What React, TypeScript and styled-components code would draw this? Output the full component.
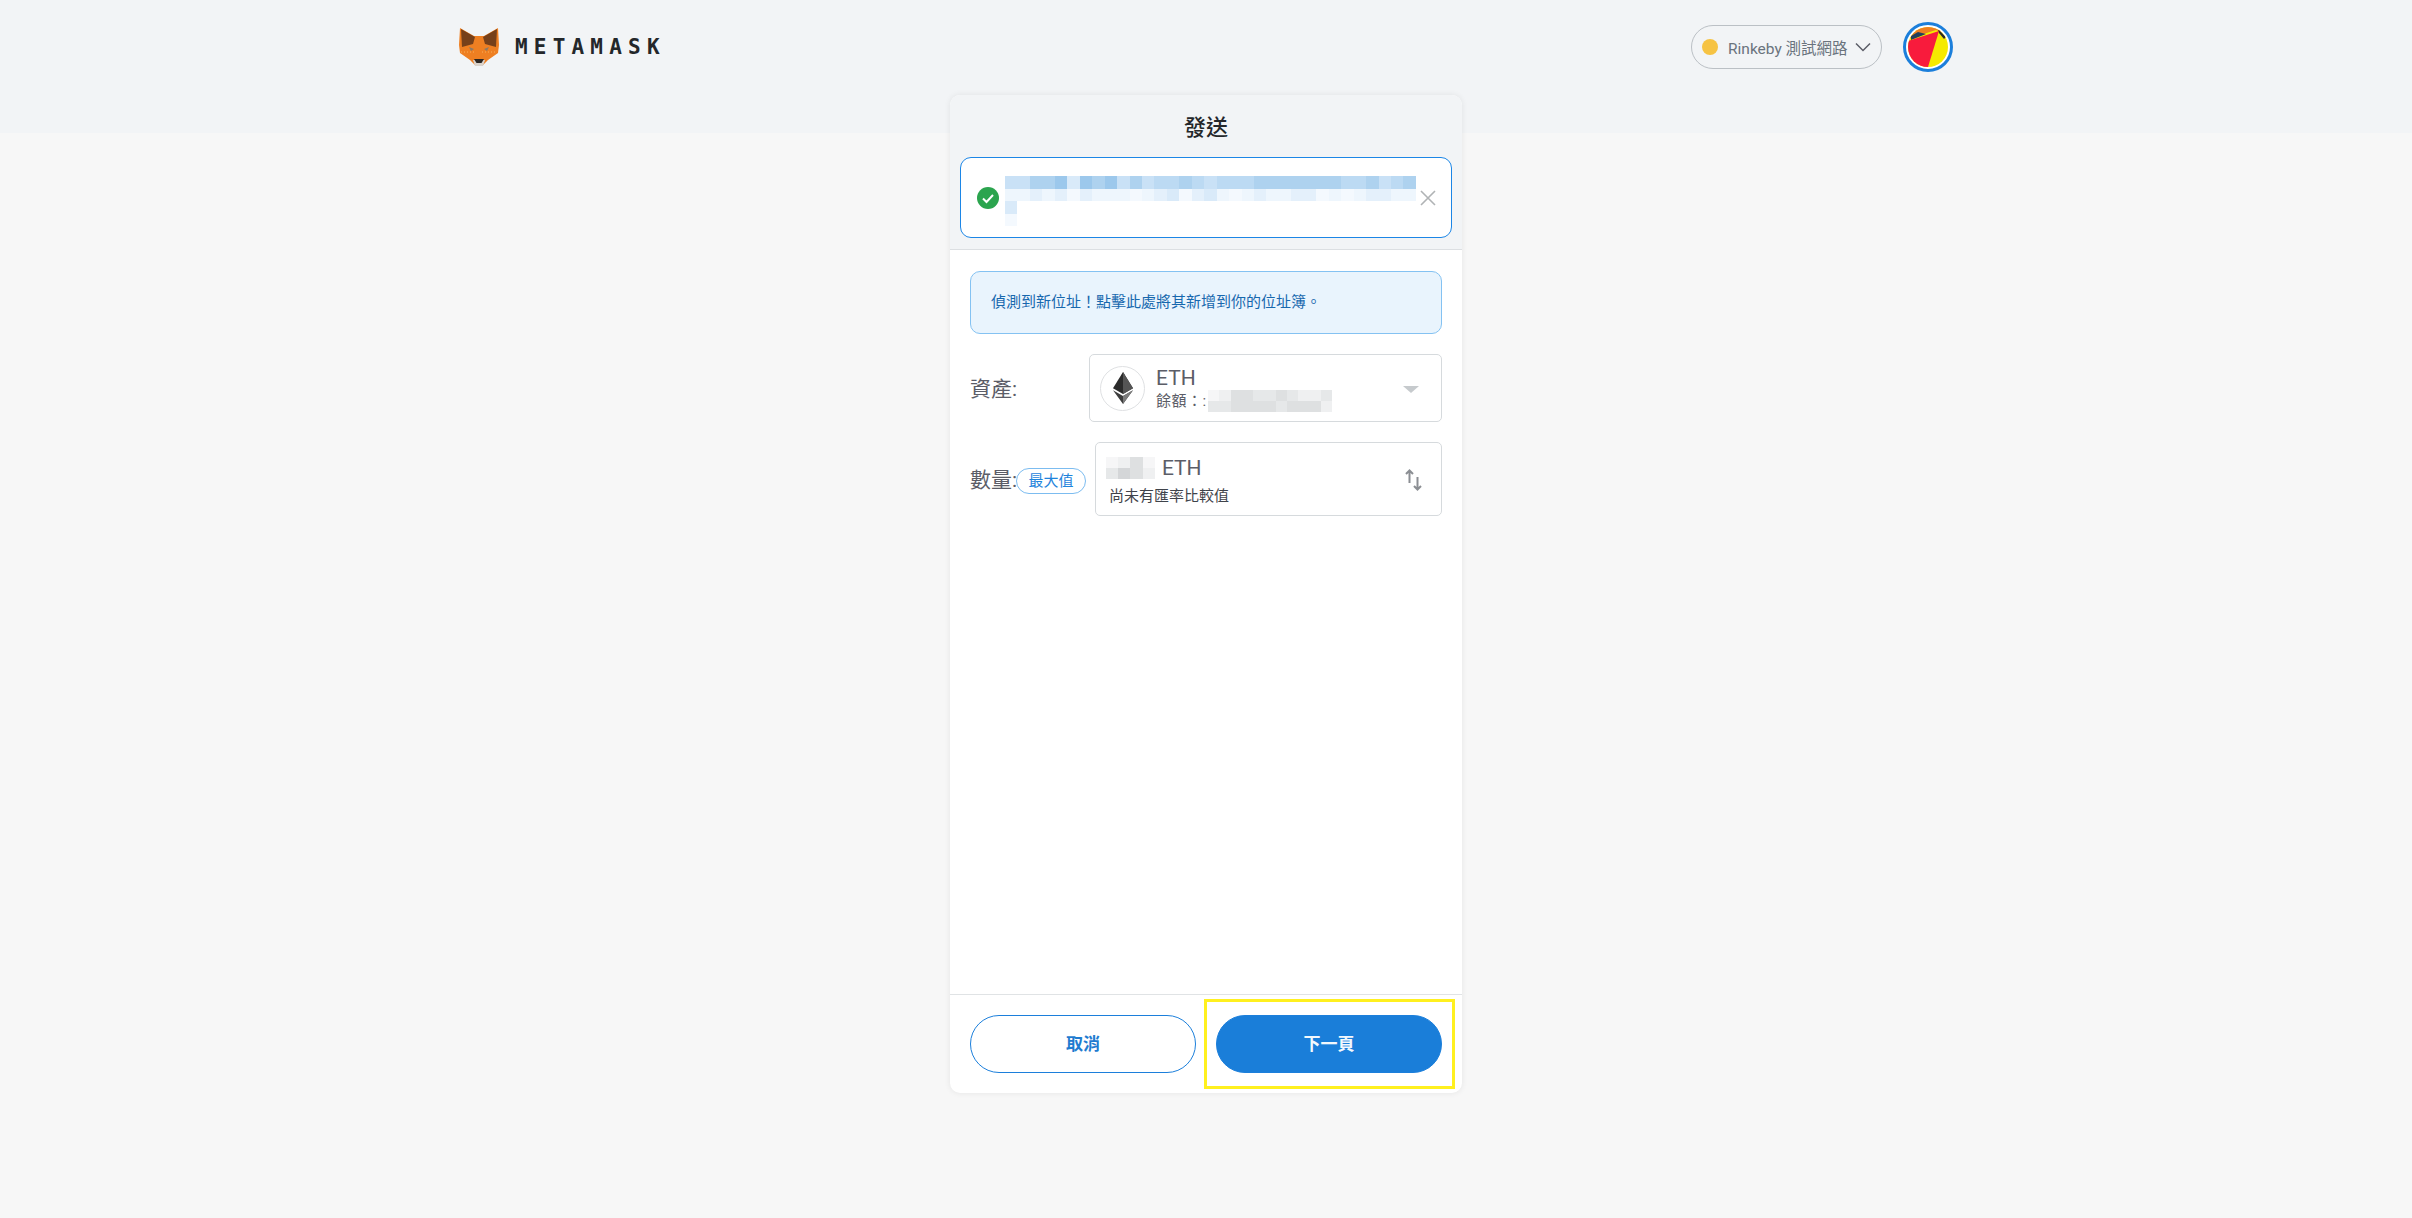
import React from "react";
import styled, { createGlobalStyle } from "styled-components";

const CJK = `"Roboto", "Noto Sans CJK TC", sans-serif`;

const Global = createGlobalStyle`
  html, body { margin: 0; padding: 0; }
  body { background: #f7f7f7; font-family: ${CJK}; }
`;

const Page = styled.div`
  position: relative;
  width: 2412px;
  height: 1218px;
  overflow: hidden;
  background: #f7f7f7;
`;

const TopBand = styled.header`
  height: 133px;
  background: #f2f4f6;
  padding: 0 458px;
  box-sizing: border-box;
`;

const TopBar = styled.div`
  height: 93px;
  display: flex;
  align-items: center;
  justify-content: space-between;
`;

const Brand = styled.div`
  display: flex;
  align-items: center;
  gap: 15px;
  margin-top: 1px;
`;

const BrandName = styled.span`
  font-family: "DejaVu Sans Mono", monospace;
  font-weight: 700;
  font-size: 21px;
  letter-spacing: 6.2px;
  color: #24272a;
`;

const TopRight = styled.div`
  display: flex;
  align-items: center;
  gap: 21px;
  margin-right: 1px;
`;

const NetworkPill = styled.div`
  width: 191px;
  height: 44px;
  box-sizing: border-box;
  border: 1.5px solid #bbc0c5;
  border-radius: 22px;
  display: flex;
  align-items: center;
  padding: 0 10px;
  color: #6a737d;
  font-size: 15.5px;
`;

const NetworkDot = styled.span`
  width: 16px;
  height: 16px;
  border-radius: 50%;
  background: #f6c343;
  margin-right: 10px;
  flex: none;
`;

const NetworkName = styled.span`
  flex: 1;
  white-space: nowrap;
`;

const AvatarRing = styled.div`
  width: 50px;
  height: 50px;
  box-sizing: border-box;
  border: 3px solid #1c7fdb;
  border-radius: 50%;
  padding: 2px;
  background: #fff;
`;

const Card = styled.main`
  position: absolute;
  left: 950px;
  top: 95px;
  width: 512px;
  height: 998px;
  background: #fff;
  border-radius: 10px;
  box-shadow: 0 0 6px rgba(0, 0, 0, 0.08);
  display: flex;
  flex-direction: column;
  overflow: hidden;
`;

const CardHead = styled.div`
  height: 155px;
  box-sizing: border-box;
  background: #f2f4f6;
  border-bottom: 1.5px solid #dcdfe2;
  padding: 0 10px;
  flex: none;
`;

const Title = styled.h1`
  margin: 0;
  height: 62px;
  line-height: 66px;
  font-size: 22px;
  font-weight: 500;
  text-align: center;
  color: #24272a;
`;

const AlertBox = styled.div`
  height: 81px;
  box-sizing: border-box;
  width: 492px;
  background: #fff;
  border: 1.5px solid #1c86e6;
  border-radius: 11px;
  display: flex;
  align-items: center;
  padding: 0 0 0 16px;
  position: relative;
`;

const AlertMosaic = styled.div`
  margin-left: 6px;
  align-self: flex-start;
  margin-top: 18px;
  display: flex;
`;

const CloseBtn = styled.span`
  position: absolute;
  right: 15px;
  top: 32px;
  display: flex;
`;

const CardBody = styled.div`
  flex: 1;
  padding: 21px 20px 0 20px;
  display: flex;
  flex-direction: column;
`;

const Notice = styled.div`
  height: 63px;
  box-sizing: border-box;
  background: #e9f4fd;
  border: 1.5px solid #84c2f2;
  border-radius: 10px;
  display: flex;
  align-items: center;
  padding: 0 20px 4px;
  font-size: 15px;
  color: #1768ae;
  white-space: nowrap;
`;

const FieldRow = styled.div<{ $top: number }>`
  display: flex;
  align-items: center;
  margin-top: ${(p) => p.$top}px;
`;

const FieldLabel = styled.label`
  font-size: 21px;
  color: #5b5d67;
  white-space: nowrap;
  margin-top: -2px;
`;

const MaxBadge = styled.span`
  width: 70px;
  height: 26px;
  box-sizing: border-box;
  border: 1px solid #7cbcf0;
  border-radius: 13px;
  font-size: 15px;
  line-height: 24px;
  text-align: center;
  color: #1f84dc;
  background: #fff;
  flex: none;
  margin: 4px 0 0 -1px;
`;

const FieldBox = styled.div<{ $h: number; $left: number }>`
  height: ${(p) => p.$h}px;
  margin-left: ${(p) => p.$left}px;
  flex: 1;
  box-sizing: border-box;
  border: 1.5px solid #d6dadd;
  border-radius: 5px;
  display: flex;
  align-items: center;
  position: relative;
`;

const TokenCircle = styled.div`
  width: 45px;
  height: 45px;
  box-sizing: border-box;
  margin-left: 10px;
  border: 1px solid #dfe1e3;
  border-radius: 50%;
  display: flex;
  align-items: center;
  justify-content: center;
  flex: none;
`;

const TokenText = styled.div`
  margin-left: 11px;
  display: flex;
  flex-direction: column;
  padding-top: 2px;
`;

const TokenName = styled.span`
  font-size: 21px;
  line-height: 24px;
  color: #5b5d67;
`;

const Balance = styled.div`
  display: flex;
  align-items: center;
  font-size: 15px;
  letter-spacing: 0.5px;
  line-height: 22px;
  color: #5b5d67;
  height: 22px;
  gap: 1px;
`;

const Caret = styled.span`
  position: absolute;
  right: 22px;
  top: 31px;
  width: 0;
  height: 0;
  border-left: 8px solid transparent;
  border-right: 8px solid transparent;
  border-top: 7px solid #c6cacd;
`;

const AmountCol = styled.div`
  margin-left: 10px;
  margin-top: 2px;
  display: flex;
  flex-direction: column;
`;

const AmountLine = styled.div`
  display: flex;
  align-items: center;
  gap: 7px;
  height: 28px;
  font-size: 21px;
  color: #5b5d67;
`;

const RateNote = styled.div`
  margin-left: 3px;
  margin-top: 4px;
  font-size: 15px;
  line-height: 20px;
  color: #3f434a;
  white-space: nowrap;
`;

const SwapIcon = styled.span`
  position: absolute;
  right: 19px;
  top: 26px;
  display: flex;
`;

const CardFoot = styled.footer`
  height: 99px;
  flex: none;
  box-sizing: border-box;
  border-top: 1.5px solid #e0e3e5;
  padding: 20px 20px 0 20px;
  display: flex;
  justify-content: space-between;
`;

const FootBtn = styled.button<{ $primary?: boolean }>`
  width: 226px;
  height: 58px;
  box-sizing: border-box;
  border-radius: 29px;
  border: 1.5px solid #1c7fdb;
  font-family: ${CJK};
  font-size: 17px;
  font-weight: 700;
  background: ${(p) => (p.$primary ? "#1a7ed9" : "#fff")};
  color: ${(p) => (p.$primary ? "#f2f8fd" : "#1f7cd0")};
  padding: 0 0 3px;
`;

const Highlight = styled.div`
  position: absolute;
  left: 1204px;
  top: 999px;
  width: 251px;
  height: 90px;
  box-sizing: border-box;
  border: 3px solid #fff01f;
  pointer-events: none;
`;

/* pixelated (redacted) blocks, one char per cell */
const palette: Record<string, string> = {
  z: "#9cc8ec",
  a: "#aed2ef",
  b: "#bcdaf3",
  c: "#c9e1f6",
  d: "#d9eaf9",
  e: "#e4f0fb",
  f: "#eef6fd",
  g: "#f4f9fe",
  q: "#d4d6d8",
  r: "#dee0e1",
  s: "#e6e8e9",
  t: "#eff0f1",
  u: "#f6f6f7",
};

function Mosaic({ rows, w, h }: { rows: string[]; w: number; h: number }) {
  const cols = Math.max(...rows.map((r) => r.length));
  return (
    <svg width={cols * w} height={rows.length * h} shapeRendering="crispEdges">
      {rows.map((row, y) =>
        row.split("").map((c, x) =>
          palette[c] ? <rect key={`${x}-${y}`} x={x * w} y={y * h} width={w} height={h} fill={palette[c]} /> : null
        )
      )}
    </svg>
  );
}

const Fox = () => (
  <svg width="42" height="40" viewBox="0 0 42 40">
    <path d="M2 1 L16 9 H26 L40 1 L41 18 L40 26 L30 33 L25 38 H17 L12 33 L2 26 L1 18Z" fill="#ee7f22" />
    <path d="M3 2 L17 10 L15 17 L4 20Z" fill="#76401a" />
    <path d="M39 2 L25 10 L27 17 L38 20Z" fill="#76401a" />
    <path d="M11 20 L16 22 L13 24Z M31 20 L26 22 L29 24Z" fill="#8a7a68" />
    <path d="M3 25 H18 M24 25 H39" stroke="#f7b15c" strokeWidth="1" strokeDasharray="1 2" />
    <path d="M15 33 H27 L25 39 H17Z" fill="#d9d2cb" />
    <path d="M16 32 H26 L23.5 36 H18.5Z" fill="#2a2522" />
  </svg>
);

const Avatar = () => (
  <svg width="40" height="40" viewBox="0 0 40 40" style={{ display: "block", borderRadius: "50%" }}>
    <rect width="40" height="40" fill="#f5ea00" />
    <path d="M0 0 H40 V8 L28 3 L0 12Z" fill="#ee7f22" />
    <path d="M3 9 L10 5 L18 7 L3 13Z" fill="#22405c" />
    <path d="M0 14 L31 4 L20 40 H0Z" fill="#f81b3c" />
    <path d="M30 2 L38 10 L36 12 L31 6Z" fill="#2b2b2b" />
  </svg>
);

const EthGlyph = () => (
  <svg width="20" height="32" viewBox="0 0 20 32">
    <path d="M10 0 L0 16.2 L10 22 L20 16.2Z" fill="#2b2b2b" />
    <path d="M10 0 L10 22 L20 16.2Z" fill="#555" />
    <path d="M0 18.2 L10 32 L20 18.2 L10 24Z" fill="#3d3d3d" />
    <path d="M10 24 V32 L20 18.2Z" fill="#7b7b7b" />
  </svg>
);

export default function App() {
  return (
    <Page>
      <Global />
      <TopBand>
        <TopBar>
          <Brand>
            <Fox />
            <BrandName>METAMASK</BrandName>
          </Brand>
          <TopRight>
            <NetworkPill>
              <NetworkDot />
              <NetworkName>Rinkeby 測試網路</NetworkName>
              <svg width="16" height="10" viewBox="0 0 16 10" fill="none" stroke="#5b5d67" strokeWidth="1.5">
                <path d="M1 1.5 L8 8.5 L15 1.5" />
              </svg>
            </NetworkPill>
            <AvatarRing>
              <Avatar />
            </AvatarRing>
          </TopRight>
        </TopBar>
      </TopBand>

      <Card>
        <CardHead>
          <Title>發送</Title>
          <AlertBox>
            <svg width="22" height="22" viewBox="0 0 22 22">
              <circle cx="11" cy="11" r="11" fill="#2ba44e" />
              <path d="M6 11.5 L9.5 15 L16 8" fill="none" stroke="#fff" strokeWidth="2" />
            </svg>
            <AlertMosaic>
              <Mosaic
                w={12.45}
                h={12.5}
                rows={["ccaazdzazcacbbabcbbbaaaaaaabbacba", "ffefegefffgfedgedfgfeffeegfgfeeff", "d", "g"]}
              />
            </AlertMosaic>
            <CloseBtn>
              <svg width="16" height="16" viewBox="0 0 16 16" stroke="#b0b3b5" strokeWidth="1.6">
                <path d="M1 1 L15 15 M15 1 L1 15" />
              </svg>
            </CloseBtn>
          </AlertBox>
        </CardHead>
        <CardBody>
          <Notice>偵測到新位址！點擊此處將其新增到你的位址簿。</Notice>
          <FieldRow $top={20}>
            <FieldLabel>資產:</FieldLabel>
            <FieldBox $h={68} $left={72}>
              <TokenCircle>
                <EthGlyph />
              </TokenCircle>
              <TokenText>
                <TokenName>ETH</TokenName>
                <Balance>
                  餘額：:
                  <Mosaic w={11.3} h={11} rows={["utrrssrstts", "ssrrrrsrrrt"]} />
                </Balance>
              </TokenText>
              <Caret />
            </FieldBox>
          </FieldRow>
          <FieldRow $top={20}>
            <FieldLabel>數量:</FieldLabel>
            <MaxBadge>最大值</MaxBadge>
            <FieldBox $h={74} $left={9}>
              <AmountCol>
                <AmountLine>
                  <Mosaic w={12.2} h={11} rows={["utru", "sqrt"]} />
                  ETH
                </AmountLine>
                <RateNote>尚未有匯率比較值</RateNote>
              </AmountCol>
              <SwapIcon>
                <svg width="17" height="22" viewBox="0 0 17 22" fill="none" stroke="#8b8e93" strokeWidth="2">
                  <path d="M4.5 14 V1.5 M1 5 L4.5 1.5 L8 5" />
                  <path d="M12.5 8 V20.5 M9 17 L12.5 20.5 L16 17" />
                </svg>
              </SwapIcon>
            </FieldBox>
          </FieldRow>
        </CardBody>
        <CardFoot>
          <FootBtn>取消</FootBtn>
          <FootBtn $primary>下一頁</FootBtn>
        </CardFoot>
      </Card>
      <Highlight />
    </Page>
  );
}
